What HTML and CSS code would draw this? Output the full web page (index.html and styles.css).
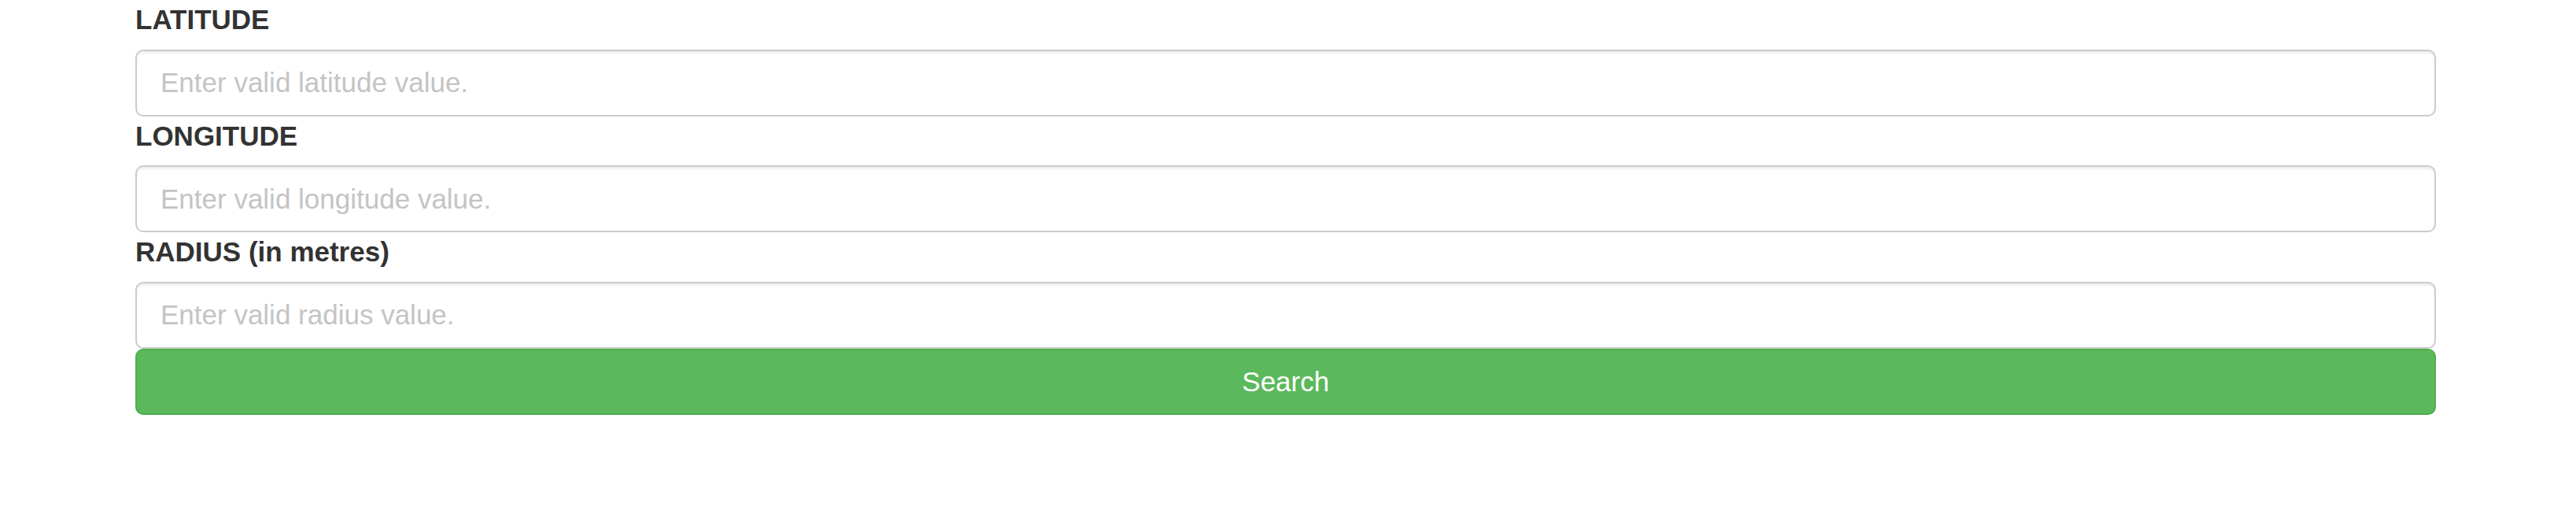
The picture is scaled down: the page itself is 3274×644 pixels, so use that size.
FILE: index.html
```html
<!DOCTYPE html>
<html lang="en">
<head>
<meta charset="utf-8">
<title>Search by location</title>
<link rel="stylesheet" href="styles.css">
</head>
<body>
<form class="search-form">
  <div class="field">
    <label class="field-label" for="lat">LATITUDE</label>
    <input class="field-input" id="lat" type="text" placeholder="Enter valid latitude value.">
  </div>
  <div class="field">
    <label class="field-label" for="lng">LONGITUDE</label>
    <input class="field-input" id="lng" type="text" placeholder="Enter valid longitude value.">
  </div>
  <div class="field">
    <label class="field-label" for="rad">RADIUS (in metres)</label>
    <input class="field-input" id="rad" type="text" placeholder="Enter valid radius value.">
  </div>
  <button class="search-btn" type="button">Search</button>
</form>
</body>
</html>
```

FILE: styles.css
```css
html, body {
  margin: 0;
  padding: 0;
  background: #ffffff;
}

body {
  font-family: "Liberation Sans", Arial, Helvetica, sans-serif;
  color: #333333;
}

.search-form {
  display: flex;
  flex-direction: column;
  width: 2924px;
  margin: 0 0 0 172px;
}

.field {
  display: flex;
  flex-direction: column;
}

.field-label {
  display: block;
  font-size: 35px;
  font-weight: bold;
  line-height: 50px;
  height: 50px;
  margin-bottom: 12.5px;
  color: #333333;
}

.field-input {
  box-sizing: border-box;
  display: block;
  width: 100%;
  height: 85px;
  margin: 0;
  padding: 0 30px;
  font-family: "Liberation Sans", Arial, Helvetica, sans-serif;
  font-size: 35px;
  color: #555555;
  background: #ffffff;
  border: 2.5px solid #cccccc;
  border-radius: 10px;
  box-shadow: inset 0 2.5px 2.5px rgba(0, 0, 0, 0.075);
  outline: none;
}

.field-input::placeholder {
  color: #c4c4c4;
  opacity: 1;
}

.search-btn {
  box-sizing: border-box;
  display: block;
  width: 100%;
  height: 84px;
  margin: 0;
  padding: 0;
  font-family: "Liberation Sans", Arial, Helvetica, sans-serif;
  font-size: 35px;
  color: #ffffff;
  background: #5cb85c;
  border: 2.5px solid #4cae4c;
  border-radius: 10px;
  cursor: pointer;
}
```
